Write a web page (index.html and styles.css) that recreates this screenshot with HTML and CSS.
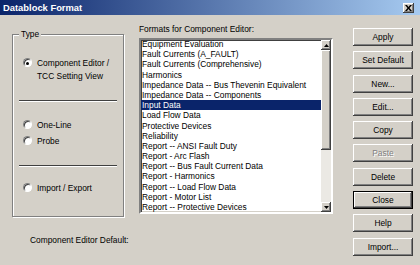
FILE: index.html
```html
<!DOCTYPE html>
<html>
<head>
<meta charset="utf-8">
<link rel="stylesheet" href="styles.css">
</head>
<body>
<div class="window">
  <div class="titlebar">
    <span class="title">Datablock Format</span>
    <span class="tb-close">
      <svg width="7" height="6" viewBox="0 0 7 6"><path d="M0 0h2l1.5 2 1.5-2h2l-2.5 3 2.5 3h-2l-1.5-2-1.5 2h-2l2.5-3z" fill="#000"/></svg>
    </span>
  </div>
  <div class="content">
    <div class="left">
      <div class="group">
        <span class="legend">Type</span>
        <div class="radio-row first"><span class="radio checked"></span><span class="rlabel">Component Editor /<br>TCC Setting View</span></div>
        <div class="sep sep1"></div>
        <div class="radio-row r-oneline"><span class="radio"></span><span class="rlabel">One-Line</span></div>
        <div class="radio-row r-probe"><span class="radio"></span><span class="rlabel">Probe</span></div>
        <div class="sep sep2"></div>
        <div class="radio-row r-import"><span class="radio"></span><span class="rlabel">Import / Export</span></div>
      </div>
      <div class="default-label">Component Editor Default:</div>
    </div>
    <div class="middle">
      <div class="list-label">Formats for Component Editor:</div>
      <div class="listbox">
        <ul class="items">
          <li>Equipment Evaluation</li>
          <li>Fault Currents (A_FAULT)</li>
          <li>Fault Currents (Comprehensive)</li>
          <li>Harmonics</li>
          <li>Impedance Data -- Bus Thevenin Equivalent</li>
          <li>Impedance Data -- Components</li>
          <li class="selected">Input Data</li>
          <li>Load Flow Data</li>
          <li>Protective Devices</li>
          <li>Reliability</li>
          <li>Report -- ANSI Fault Duty</li>
          <li>Report - Arc Flash</li>
          <li>Report -- Bus Fault Current Data</li>
          <li>Report - Harmonics</li>
          <li>Report -- Load Flow Data</li>
          <li>Report - Motor List</li>
          <li>Report -- Protective Devices</li>
        </ul>
        <div class="scrollbar">
          <div class="sb-btn"><svg width="5" height="3" viewBox="0 0 5 3"><path d="M2.5 0L5 3H0z" fill="#000"/></svg></div>
          <div class="sb-thumb"></div>
          <div class="sb-track"></div>
          <div class="sb-btn"><svg width="5" height="3" viewBox="0 0 5 3"><path d="M0 0h5L2.5 3z" fill="#000"/></svg></div>
        </div>
      </div>
    </div>
    <div class="buttons">
      <div class="btn">Apply</div>
      <div class="btn">Set Default</div>
      <div class="btn">New...</div>
      <div class="btn">Edit...</div>
      <div class="btn">Copy</div>
      <div class="btn disabled">Paste</div>
      <div class="btn">Delete</div>
      <div class="btn default">Close</div>
      <div class="btn">Help</div>
      <div class="btn">Import...</div>
    </div>
  </div>
</div>
</body>
</html>
```
FILE: styles.css
```css
* { box-sizing: border-box; }
html, body { margin: 0; padding: 0; }
body {
  width: 420px;
  height: 265px;
  overflow: hidden;
  background: #d4d0c8;
  font-family: "Liberation Sans", Arial, sans-serif;
  font-size: 8.4px;
  color: #000;
}
.window { width: 420px; height: 265px; }

.titlebar {
  height: 15px;
  background: linear-gradient(to right, #0a246a, #a6caf0);
  display: flex;
  align-items: center;
  justify-content: space-between;
  padding: 0 6px 0 3px;
}
.title {
  color: #fff;
  font-weight: bold;
  font-size: 9.4px;
  line-height: 15px;
}
.tb-close {
  width: 11px;
  height: 10px;
  background: #d4d0c8;
  box-shadow: inset -1px -1px #404040, inset 1px 1px #fff, inset -2px -2px #808080;
  display: flex;
  align-items: center;
  justify-content: center;
}

.content { display: flex; padding-left: 12px; }

.left { width: 112px; }
.group {
  position: relative;
  margin-top: 19px;
  height: 183px;
  border: 1px solid #808080;
  box-shadow: inset 1px 1px #fff, 1px 1px #fff;
  padding-top: 21.5px;
}
.legend {
  position: absolute;
  left: 6px;
  top: -6px;
  padding: 0 2px;
  background: #d4d0c8;
  line-height: 10px;
}
.radio-row {
  display: flex;
  align-items: flex-start;
  padding-left: 9.5px;
  line-height: 13px;
}
.radio {
  flex: none;
  width: 9px;
  height: 9px;
  margin-top: 1.5px;
  margin-right: 5.5px;
  border-radius: 50%;
  background: #fff;
  border: 1px solid #808080;
  border-right-color: #fff;
  border-bottom-color: #fff;
  box-shadow: inset 1px 1px #404040;
  position: relative;
}
.radio.checked::after {
  content: "";
  position: absolute;
  left: 2.5px;
  top: 2.5px;
  width: 3px;
  height: 3px;
  border-radius: 50%;
  background: #000;
}
.sep {
  height: 2px;
  border-top: 1px solid #404040;
  border-bottom: 1px solid #fff;
  margin: 0 6px 0 6px;
}
.sep1 { margin-top: 17.5px; }
.r-oneline { margin-top: 16.5px; }
.r-probe { margin-top: 3px; }
.sep2 { margin-top: 17.5px; }
.r-import { margin-top: 14.5px; }

.default-label {
  margin-top: 18px;
  margin-left: 18px;
  line-height: 10px;
  white-space: nowrap;
}

.middle { width: 194px; margin-left: 15px; }
.list-label {
  margin-top: 9px;
  line-height: 10px;
  height: 10px;
  margin-bottom: 4px;
}
.listbox {
  height: 176px;
  display: flex;
  background: #fff;
  border: 2px solid;
  border-color: #808080 #fff #fff #808080;
  box-shadow: inset 1px 1px #404040, inset -1px -1px #d4d0c8;
  overflow: hidden;
}
.items {
  flex: 1;
  list-style: none;
  margin: -1px 0 0 0;
  padding: 0;
  overflow: hidden;
}
.items li {
  height: 10.2px;
  line-height: 10.2px;
  padding-left: 1px;
  white-space: nowrap;
  overflow: hidden;
}
.items li.selected {
  background: #0a246a;
  color: #fff;
}
.scrollbar {
  width: 10px;
  display: flex;
  flex-direction: column;
}
.sb-btn {
  height: 10px;
  background: #d4d0c8;
  box-shadow: inset -1px -1px #404040, inset 1px 1px #fff, inset -2px -2px #808080;
  display: flex;
  align-items: center;
  justify-content: center;
}
.sb-thumb {
  height: 100px;
  background: #d4d0c8;
  box-shadow: inset -1px -1px #404040, inset 1px 1px #fff, inset -2px -2px #808080;
}
.sb-track {
  flex: 1;
  background: #ebe9e4;
}

.buttons {
  width: 60px;
  margin-left: 20px;
  margin-top: 13px;
  display: flex;
  flex-direction: column;
  gap: 5.3px;
}
.btn {
  height: 18px;
  line-height: 18px;
  text-align: center;
  background: #d4d0c8;
  box-shadow: inset -1px -1px #404040, inset 1px 1px #fff, inset -2px -2px #808080, inset 2px 2px #d4d0c8;
  white-space: nowrap;
}
.btn.disabled {
  color: #808080;
  text-shadow: 1px 1px #fff;
}
.btn.default {
  border: 1px solid #000;
  line-height: 16px;
}
```
